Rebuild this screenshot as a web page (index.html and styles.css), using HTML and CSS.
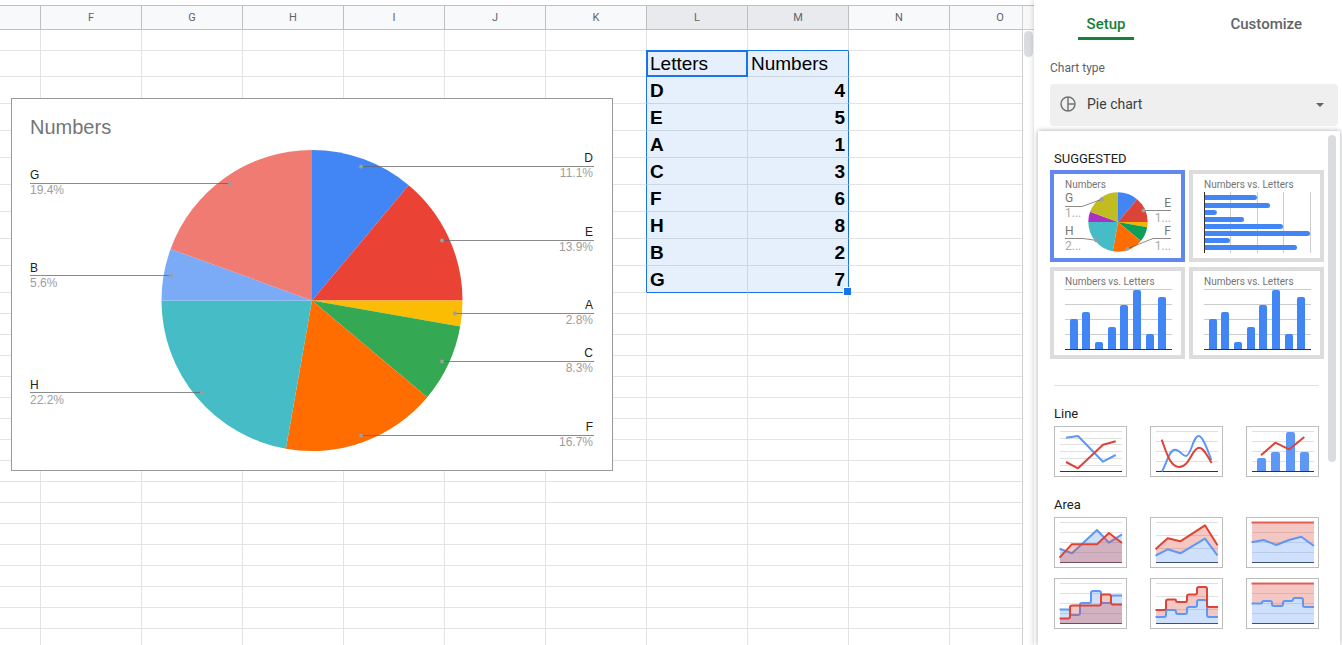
FILE: index.html
```html
<!DOCTYPE html>
<html lang="en">
<head>
<meta charset="utf-8">
<title>Chart editor</title>
<link rel="stylesheet" href="styles.css">
</head>
<body>
<main class="sheet">
  <div class="viewport">
    <table class="grid">
      <colgroup><col class="col-first"><col span="10"></colgroup>
      <thead>
        <tr><th></th><th>F</th><th>G</th><th>H</th><th>I</th><th>J</th><th>K</th><th class="picked">L</th><th class="picked">M</th><th>N</th><th>O</th></tr>
      </thead>
      <tbody>
        <tr><td><td><td><td><td><td><td><td class="edge-bottom"><td class="edge-bottom"><td><td></tr>
        <tr class="row-title"><td><td><td><td><td><td><td class="edge-right"><td class="sel active">Letters<td class="sel edge-right">Numbers<td><td></tr>
        <tr class="row-data"><td><td><td><td><td><td><td class="edge-right"><td class="sel">D<td class="sel num edge-right">4<td><td></tr>
        <tr class="row-data"><td><td><td><td><td><td><td class="edge-right"><td class="sel">E<td class="sel num edge-right">5<td><td></tr>
        <tr class="row-data"><td><td><td><td><td><td><td class="edge-right"><td class="sel">A<td class="sel num edge-right">1<td><td></tr>
        <tr class="row-data"><td><td><td><td><td><td><td class="edge-right"><td class="sel">C<td class="sel num edge-right">3<td><td></tr>
        <tr class="row-data"><td><td><td><td><td><td><td class="edge-right"><td class="sel">F<td class="sel num edge-right">6<td><td></tr>
        <tr class="row-data"><td><td><td><td><td><td><td class="edge-right"><td class="sel">H<td class="sel num edge-right">8<td><td></tr>
        <tr class="row-data"><td><td><td><td><td><td><td class="edge-right"><td class="sel">B<td class="sel num edge-right">2<td><td></tr>
        <tr class="row-data"><td><td><td><td><td><td><td class="edge-right"><td class="sel edge-bottom">G<td class="sel num edge-right edge-bottom handle">7<td><td></tr>
        <tr><td><td><td><td><td><td><td><td><td><td><td></tr>
        <tr><td><td><td><td><td><td><td><td><td><td><td></tr>
        <tr><td><td><td><td><td><td><td><td><td><td><td></tr>
        <tr><td><td><td><td><td><td><td><td><td><td><td></tr>
        <tr><td><td><td><td><td><td><td><td><td><td><td></tr>
        <tr><td><td><td><td><td><td><td><td><td><td><td></tr>
        <tr><td><td><td><td><td><td><td><td><td><td><td></tr>
        <tr><td><td><td><td><td><td><td><td><td><td><td></tr>
        <tr><td><td><td><td><td><td><td><td><td><td><td></tr>
        <tr><td><td><td><td><td><td><td><td><td><td><td></tr>
        <tr><td><td><td><td><td><td><td><td><td><td><td></tr>
        <tr><td><td><td><td><td><td><td><td><td><td><td></tr>
        <tr><td><td><td><td><td><td><td><td><td><td><td></tr>
        <tr><td><td><td><td><td><td><td><td><td><td><td></tr>
        <tr><td><td><td><td><td><td><td><td><td><td><td></tr>
        <tr><td><td><td><td><td><td><td><td><td><td><td></tr>
        <tr><td><td><td><td><td><td><td><td><td><td><td></tr>
      </tbody>
    </table>
    <figure class="chart">
      <svg width="600" height="371" viewBox="0 0 600 371" role="img" aria-label="Pie chart of Numbers">
        <g>
          <path fill="#4285f4" d="M300 201.5V51A150.5 150.5 0 0 1 396.7 86.2Z"/>
          <path fill="#ea4335" d="M300 201.5L396.7 86.2A150.5 150.5 0 0 1 450.5 201.5Z"/>
          <path fill="#fbbc04" d="M300 201.5H450.5A150.5 150.5 0 0 1 448.2 227.6Z"/>
          <path fill="#34a853" d="M300 201.5L448.2 227.6A150.5 150.5 0 0 1 415.3 298.2Z"/>
          <path fill="#ff6d01" d="M300 201.5L415.3 298.2A150.5 150.5 0 0 1 273.9 349.7Z"/>
          <path fill="#46bdc6" d="M300 201.5L273.9 349.7A150.5 150.5 0 0 1 149.5 201.5Z"/>
          <path fill="#7baaf7" d="M300 201.5H149.5A150.5 150.5 0 0 1 158.6 150Z"/>
          <path fill="#f07b72" d="M300 201.5L158.6 150A150.5 150.5 0 0 1 300 51Z"/>
        </g>
        <path class="leader" d="M349 67.5H582M430 141.5H582M443 214.5H582M430 262.5H582M349 336.5H582M18 84.5H218M18 176.5H159M18 293.5H190"/>
        <g fill="#9e9e9e">
          <circle cx="349" cy="67.5" r="2"/><circle cx="430" cy="141.5" r="2"/><circle cx="443" cy="214.5" r="2"/><circle cx="430" cy="262.5" r="2"/>
          <circle cx="349" cy="336.5" r="2"/><circle cx="218" cy="84.5" r="2"/><circle cx="159" cy="176.5" r="2"/><circle cx="190" cy="293.5" r="2"/>
        </g>
        <text class="chart-title" x="18" y="35">Numbers</text>
        <g class="name"><text x="18" y="80">G</text><text x="18" y="173">B</text><text x="18" y="290">H</text></g>
        <g class="share"><text x="18" y="95">19.4%</text><text x="18" y="188">5.6%</text><text x="18" y="305">22.2%</text></g>
        <g class="name end"><text x="581" y="63">D</text><text x="581" y="137">E</text><text x="581" y="210">A</text><text x="581" y="258">C</text><text x="581" y="332">F</text></g>
        <g class="share end"><text x="581" y="78">11.1%</text><text x="581" y="152">13.9%</text><text x="581" y="225">2.8%</text><text x="581" y="273">8.3%</text><text x="581" y="347">16.7%</text></g>
      </svg>
    </figure>
  </div>
  <div class="gutter"><div class="gutter-head"></div><div class="gutter-thumb"></div></div>
</main>

<aside class="panel">
  <nav class="tabs" role="tablist">
    <button class="tab current" role="tab" aria-selected="true"><span>Setup</span></button>
    <button class="tab" role="tab" aria-selected="false"><span>Customize</span></button>
  </nav>
  <div class="field">
    <label for="chart-type">Chart type</label>
    <div class="picker">
      <select id="chart-type"><option>Pie chart</option><option>Line chart</option><option>Area chart</option></select>
      <svg class="picker-icon" width="16" height="16" viewBox="0 0 16 16" fill="none" stroke="#757575" stroke-width="1.5"><circle cx="8" cy="8" r="7"/><path d="M8 1V15M8 8H15"/></svg>
      <svg class="picker-arrow" width="8" height="4" viewBox="0 0 8 4"><path fill="#5f6368" d="M0 0H8L4 4Z"/></svg>
    </div>
  </div>

  <div class="menu">
    <div class="menu-list">
      <h2>SUGGESTED</h2>
      <div class="cards">
        <button class="card chosen" aria-label="Pie chart">
          <svg width="127" height="84" viewBox="0 0 127 84">
            <path fill="#4285f4" d="M64 48V18.3A29.7 29.7 0 0 1 83.1 25.2Z"/>
            <path fill="#db4437" d="M64 48L83.1 25.2A29.7 29.7 0 0 1 93.7 48Z"/>
            <path fill="#f4b400" d="M64 48H93.7A29.7 29.7 0 0 1 93.2 53.2Z"/>
            <path fill="#0f9d58" d="M64 48L93.2 53.2A29.7 29.7 0 0 1 86.8 67.1Z"/>
            <path fill="#ff6d00" d="M64 48L86.8 67.1A29.7 29.7 0 0 1 58.8 77.2Z"/>
            <path fill="#46bdc6" d="M64 48L58.8 77.2A29.7 29.7 0 0 1 34.3 48Z"/>
            <path fill="#ab30c4" d="M64 48H34.3A29.7 29.7 0 0 1 36.1 37.8Z"/>
            <path fill="#c1bc1f" d="M64 48L36.1 37.8A29.7 29.7 0 0 1 64 18.3Z"/>
            <path class="leader" d="M11 32.5H28L47.7 25.3M117 36.5H89.5M11 64.5H29L42 66.3M117 64.5H99L73.3 74.7"/>
            <g fill="#9e9e9e"><circle cx="47.7" cy="25.3" r="2"/><circle cx="89.5" cy="36.5" r="2"/><circle cx="42" cy="66.3" r="2"/><circle cx="73.3" cy="74.7" r="2"/></g>
            <text class="card-title" x="11" y="14">Numbers</text>
            <g class="mini-name"><text x="11" y="28">G</text><text x="11" y="61">H</text></g>
            <g class="mini-share"><text x="11" y="43">1...</text><text x="11" y="76">2...</text></g>
            <g class="mini-name end"><text x="117" y="33">E</text><text x="117" y="61">F</text></g>
            <g class="mini-share end"><text x="117" y="48">1...</text><text x="117" y="76">1...</text></g>
          </svg>
        </button>
        <button class="card" aria-label="Bar chart">
          <svg width="127" height="84" viewBox="0 0 127 84">
            <path class="rule" d="M37.5 18V79M64.5 18V79M90.5 18V79M117.5 18V79"/>
            <path class="axis" d="M11.5 18V79"/>
            <g fill="#4285f4">
              <path d="M12 21H61.5a2.5 2.5 0 0 1 0 5H12Z"/><path d="M12 29H74.5a2.5 2.5 0 0 1 0 5H12Z"/>
              <path d="M12 36H21.5a2.5 2.5 0 0 1 0 5H12Z"/><path d="M12 43H48.5a2.5 2.5 0 0 1 0 5H12Z"/>
              <path d="M12 50H87.5a2.5 2.5 0 0 1 0 5H12Z"/><path d="M12 57H114.5a2.5 2.5 0 0 1 0 5H12Z"/>
              <path d="M12 64H34.5a2.5 2.5 0 0 1 0 5H12Z"/><path d="M12 71H101.5a2.5 2.5 0 0 1 0 5H12Z"/>
            </g>
            <text class="card-title" x="11" y="14">Numbers vs. Letters</text>
          </svg>
        </button>
        <button class="card" aria-label="Column chart">
          <svg width="127" height="84" viewBox="0 0 127 84">
            <g id="columns">
              <path class="rule" d="M11 18.5H118M11 33.5H118M11 48.5H118M11 63.5H118"/>
              <g fill="#4285f4">
                <path d="M16 78V50q0-2 2-2h4q2 0 2 2V78Z"/><path d="M28 78V43q0-2 2-2h4q2 0 2 2V78Z"/>
                <path d="M41 78V73q0-2 2-2h4q2 0 2 2V78Z"/><path d="M54 78V58q0-2 2-2h4q2 0 2 2V78Z"/>
                <path d="M66 78V36q0-2 2-2h4q2 0 2 2V78Z"/><path d="M79 78V21q0-2 2-2h4q2 0 2 2V78Z"/>
                <path d="M92 78V65q0-2 2-2h4q2 0 2 2V78Z"/><path d="M104 78V28q0-2 2-2h4q2 0 2 2V78Z"/>
              </g>
              <path class="axis" d="M11 78.5H118"/>
            </g>
            <text class="card-title" x="11" y="14">Numbers vs. Letters</text>
          </svg>
        </button>
        <button class="card" aria-label="Stacked column chart">
          <svg width="127" height="84" viewBox="0 0 127 84">
            <use href="#columns"/>
            <text class="card-title" x="11" y="14">Numbers vs. Letters</text>
          </svg>
        </button>
      </div>
      <hr>
      <h2>Line</h2>
      <div class="thumbs">
        <button class="thumb" aria-label="Line chart">
          <svg width="71" height="49" viewBox="0 0 71 49">
            <path class="faint" d="M5 4.5H67M5 11.5H67M5 17.5H67M5 24.5H67M5 31.5H67M5 38.5H67"/><path class="axis" d="M5 44.5H67"/>
            <path class="blue" d="M11 10.7L23 9L48 34.7L60.7 28"/><path class="red" d="M11 35L23 41.3L48 17.7L60.7 14.3"/>
          </svg>
        </button>
        <button class="thumb" aria-label="Smooth line chart">
          <svg width="71" height="49" viewBox="0 0 71 49">
            <path class="faint" d="M5 4.5H67M5 14.5H67M5 24.5H67M5 34.5H67"/><path class="axis" d="M5 44.5H67"/>
            <path class="blue" d="M11 44.5C16 36 18 22.7 24 22.7C29 22.7 31 29 35 29C40 29 42 9 47.7 9C52 9 57 24 60.3 33"/>
            <path class="red" d="M10.7 12.7C15 24 19 40 28 40C39 40 41 20.7 48 20.7C53 20.7 56 29 60.7 36"/>
          </svg>
        </button>
        <button class="thumb" aria-label="Combo chart">
          <svg width="71" height="49" viewBox="0 0 71 49">
            <path class="faint" d="M5 4.5H67M5 14.5H67M5 24.5H67M5 34.5H67"/>
            <path fill="#5e97f6" d="M10 44V33q0-2 2-2h5q2 0 2 2V44ZM24 44V27q0-2 2-2h5q2 0 2 2V44ZM39 44V7q0-2 2-2h5q2 0 2 2V44ZM53 44V27q0-2 2-2h5q2 0 2 2V44Z"/>
            <path class="axis" d="M5 44.5H67"/><path class="red" d="M14 28.3L28.3 15.7L42.3 22.3L57.3 10"/>
          </svg>
        </button>
      </div>
      <h2>Area</h2>
      <div class="thumbs">
        <button class="thumb" aria-label="Area chart">
          <svg width="71" height="49" viewBox="0 0 71 49">
            <path class="faint" d="M5 4.5H67M5 14.5H67M5 24.5H67M5 34.5H67"/><path class="axis" d="M5 44.5H67"/>
            <path class="blue-fill" d="M5 45V30.7L17 35.3L42 12L54 24.7L67 16.3V45Z"/><path class="blue" d="M4.5 30.7L17 35.3L42 12L54 24.7L67 16.3"/>
            <path class="red-fill" d="M5 45V39.7L16.7 26.3H42L54 15L67 25V45Z"/><path class="red" d="M4.5 39.7L16.7 26.3H42L54 15L67 25"/>
          </svg>
        </button>
        <button class="thumb" aria-label="Stacked area chart">
          <svg width="71" height="49" viewBox="0 0 71 49">
            <path class="faint" d="M5 4.5H67M5 17.5H67M5 30.5H67"/><path class="axis" d="M5 44.5H67"/>
            <path class="red-fill" d="M5 31.3L16.7 20.3L29.3 23.3L54 7.3L67 27.3V37.5L54 20.7L29.3 35.3L16.7 31.3L5 37.7Z"/>
            <path class="blue-fill" d="M5 45V37.7L16.7 31.3L29.3 35.3L54 20.7L67 37.5V45Z"/>
            <path class="blue" d="M4.5 37.7L16.7 31.3L29.3 35.3L54 20.7L66.5 37.5"/><path class="red" d="M4.5 31.3L16.7 20.3L29.3 23.3L54 7.3L66.5 27.3"/>
          </svg>
        </button>
        <button class="thumb" aria-label="100% stacked area chart">
          <svg width="71" height="49" viewBox="0 0 71 49">
            <path class="faint" d="M5 14.5H67M5 24.5H67M5 34.5H67"/><path class="axis" d="M5 44.5H67"/>
            <path class="red-fill" d="M5 4H67V28L54.3 18.7L42 22L29.3 27L16.7 22L5 24.3Z"/>
            <path class="blue-fill" d="M5 45V24.3L16.7 22L29.3 27L42 22L54.3 18.7L67 28V45Z"/>
            <path class="blue" d="M4.5 24.3L16.7 22L29.3 27L42 22L54.3 18.7L67 28"/><path class="red top" d="M4.5 4.5H67"/>
          </svg>
        </button>
        <button class="thumb" aria-label="Stepped area chart">
          <svg width="71" height="49" viewBox="0 0 71 49">
            <path class="faint" d="M5 4.5H67M5 14.5H67M5 24.5H67M5 34.5H67"/><path class="axis" d="M5 44.5H67"/>
            <path class="blue-fill" d="M5 45V30.5H15V36H25V24H36V12H46V24H56V16.5H67V45Z"/>
            <path class="blue" d="M4.5 30.5H13q2 0 2 2V34q0 2 2 2H23q2 0 2-2V26q0-2 2-2H34q2 0 2-2V14q0-2 2-2H44q2 0 2 2V22q0 2 2 2H54q2 0 2-2V18.5q0-2 2-2H67"/>
            <path class="red-fill" d="M5 45V39.5H15V26.5H46V15.5H56V25.5H67V45Z"/>
            <path class="red" d="M4.5 39.5H13q2 0 2-2V28.5q0-2 2-2H44q2 0 2-2V17.5q0-2 2-2H54q2 0 2 2V23.5q0 2 2 2H67"/>
          </svg>
        </button>
        <button class="thumb" aria-label="Stacked stepped area chart">
          <svg width="71" height="49" viewBox="0 0 71 49">
            <path class="faint" d="M5 4.5H67M5 17.5H67M5 30.5H67"/><path class="axis" d="M5 44.5H67"/>
            <path class="red-fill" d="M5 31H15V20.5H25V23H36V15.5H46V8H56V28H67V38H56V21H46V28H36V35H25V31H15V38H5Z"/>
            <path class="blue-fill" d="M5 45V38H15V31H25V35H36V28H46V21H56V38H67V45Z"/>
            <path class="blue" d="M4.5 38H13q2 0 2-2V33q0-2 2-2H23q2 0 2 2q0 2 2 2H34q2 0 2-2V30q0-2 2-2H44q2 0 2-2V23q0-2 2-2H54q2 0 2 2V36q0 2 2 2H67"/>
            <path class="red" d="M4.5 31H13q2 0 2-2V22.5q0-2 2-2H24q1 0 1 1q0 1.5 2 1.5H34q2 0 2-2V17.5q0-2 2-2H44q2 0 2-2V10q0-2 2-2H54q2 0 2 2V26q0 2 2 2H67"/>
          </svg>
        </button>
        <button class="thumb" aria-label="100% stacked stepped area chart">
          <svg width="71" height="49" viewBox="0 0 71 49">
            <path class="faint" d="M5 14.5H67M5 24.5H67M5 34.5H67"/><path class="axis" d="M5 44.5H67"/>
            <path class="red-fill" d="M5 4H67V28H56V19H46V22H36V27H25V22H15V24.5H5Z"/>
            <path class="blue-fill" d="M5 45V24.5H15V22H25V27H36V22H46V19H56V28H67V45Z"/>
            <path class="blue" d="M4.5 24.5H13q2 0 2-1q0-1.5 2-1.5H23q2 0 2 2V25q0 2 2 2H34q2 0 2-2V24q0-2 2-2H44q2 0 2-1.5q0-1.5 2-1.5H54q2 0 2 2V26q0 2 2 2H67"/>
            <path class="red top" d="M4.5 4.5H67"/>
          </svg>
        </button>
      </div>
    </div>
    <div class="menu-thumb"></div>
  </div>
</aside>
</body>
</html>
```

FILE: styles.css
```css
* { box-sizing: border-box; }

body {
  margin: 0;
  display: flex;
  height: 100vh;
  overflow: hidden;
  background: #fff;
  font-family: Roboto, "Liberation Sans", sans-serif;
  color: #202124;
}

button {
  font: inherit;
  color: inherit;
  background: none;
  border: 0;
  padding: 0;
  cursor: pointer;
}

svg { display: block; }

/* Spreadsheet */
.sheet {
  flex: 1;
  min-width: 0;
  display: flex;
  margin-top: 5px;
  border-top: 1px solid #c0c0c0;
}

.viewport {
  position: relative;
  flex: 1;
  min-width: 0;
  overflow: hidden;
  border-right: 1px solid #d0d0d0;
}

.grid {
  table-layout: fixed;
  width: 1051px;
  border-collapse: separate;
  border-spacing: 0;
  font: 19px/24px "Liberation Sans", Arial, sans-serif;
  color: #000;
}

.grid col { width: 101px; }
.grid .col-first { width: 41px; }

.grid th {
  height: 24px;
  padding: 0;
  background: #f8f9fa;
  border: solid #c0c0c0;
  border-width: 0 1px 1px 0;
  font: 11px/22px Roboto, sans-serif;
  color: #5f6368;
}

.grid th.picked { background: #e8eaed; }

.grid td {
  height: 21px;
  padding: 0 3px;
  border: solid #e2e3e3;
  border-width: 0 1px 1px 0;
}

.grid .row-title td { height: 26px; }
.grid .row-data td { height: 27px; padding-top: 2px; font-weight: 700; }

.grid td.sel {
  position: relative;
  background: #e6effc;
  border-color: #cbd6e3;
}

.grid td.num { text-align: right; }
.grid td.edge-right { border-right-color: #1a73e8; }
.grid td.edge-bottom { border-bottom-color: #1a73e8; }

.active::after {
  content: "";
  position: absolute;
  z-index: 1;
  inset: -1px;
  border: 2px solid #1a73e8;
}

.handle::after {
  content: "";
  position: absolute;
  right: -3px;
  bottom: -3px;
  width: 7px;
  height: 7px;
  background: #1a73e8;
  border: solid #fff;
  border-width: 1px 0 0 1px;
}

.gutter { width: 11px; }

.gutter-head {
  height: 24px;
  background: #f8f8f8;
  border-bottom: 1px solid #d0d0d0;
}

.gutter-thumb {
  height: 26px;
  margin: 1px;
  border-radius: 5px;
  background: #dadce0;
}

/* Floating chart */
.chart {
  position: absolute;
  left: 11px;
  top: 92px;
  margin: 0;
  border: 1px solid #999;
  background: #fff;
  font: 12px "Liberation Sans", Arial, sans-serif;
}

.leader { fill: none; stroke: #636363; stroke-opacity: .75; }
.chart-title { font-size: 20px; fill: #757575; }
.name { fill: #222; }
.share { fill: #9e9e9e; }
.end { text-anchor: end; }

/* Chart editor */
.panel {
  position: relative;
  width: 308px;
  background: #fff;
  box-shadow: 0 0 6px rgba(60, 64, 67, .25);
}

.tabs {
  display: flex;
  justify-content: space-between;
  padding: 8px 40px 0 44px;
}

.tab {
  height: 32px;
  font-size: 15px;
  font-weight: 500;
  color: #5f6368;
  border-bottom: 3px solid transparent;
}

.tab.current {
  width: 56px;
  color: #188038;
  border-bottom-color: #188038;
  border-radius: 2px 2px 0 0;
}

.tab span { display: block; line-height: 32px; height: 29px; }

.field { padding: 20px 4px 0 16px; }

.field label {
  display: block;
  font-size: 12px;
  line-height: 16px;
  color: #5f6368;
}

.picker { position: relative; margin-top: 8px; }

.picker select {
  display: block;
  width: 100%;
  height: 42px;
  padding: 0 37px 2px;
  appearance: none;
  border: 0;
  border-radius: 4px;
  background: #efefef;
  font: 14px Roboto, sans-serif;
  color: #3c4043;
}

.picker-icon { position: absolute; left: 10px; top: 12px; }
.picker-arrow { position: absolute; right: 14px; top: 19px; }

/* Chart type menu */
.menu {
  position: absolute;
  top: 131px;
  right: 2px;
  bottom: 0;
  left: 4px;
  overflow: hidden;
  background: #fff;
  box-shadow: 0 0 5px rgba(0, 0, 0, .35);
}

.menu-list { padding: 20px 16px 0 12px; }

.menu h2 {
  margin: 20px 4px 4px;
  font-size: 13px;
  font-weight: 400;
  line-height: 16px;
}

.menu h2:first-child { margin: 0 4px 3px; }

.cards {
  display: grid;
  grid-template-columns: repeat(2, 1fr);
  gap: 5px 4px;
}

.card { border: 4px solid #dcdcdc; overflow: hidden; }
.card.chosen { border-color: #6287ee; }

.card-title { font-size: 10px; fill: #757575; }
.mini-name { font-size: 12px; fill: #757575; }
.mini-share { font-size: 12px; fill: #aaa; }
.rule { stroke: #ccc; }
.axis { stroke: #333; }
.faint { stroke: #e0e0e0; }

.menu hr {
  height: 1px;
  margin: 26px 5px 0 4px;
  border: 0;
  background: #e0e0e0;
}

.thumbs {
  display: grid;
  grid-template-columns: repeat(3, 73px);
  justify-content: space-between;
  row-gap: 10px;
  padding: 0 5px 0 4px;
}

.thumb { border: 1px solid #bdbdbd; }

.blue, .red { fill: none; stroke-width: 2; stroke-linejoin: round; }
.blue { stroke: #5e97f6; }
.red { stroke: #db4437; }
.red.top { stroke-opacity: .8; }
.blue-fill { fill: #5e97f6; fill-opacity: .3; }
.red-fill { fill: #db4437; fill-opacity: .3; }

.menu-thumb {
  position: absolute;
  top: 4px;
  right: 4px;
  width: 8px;
  height: 327px;
  border-radius: 4px;
  background: #dadce0;
}
```
